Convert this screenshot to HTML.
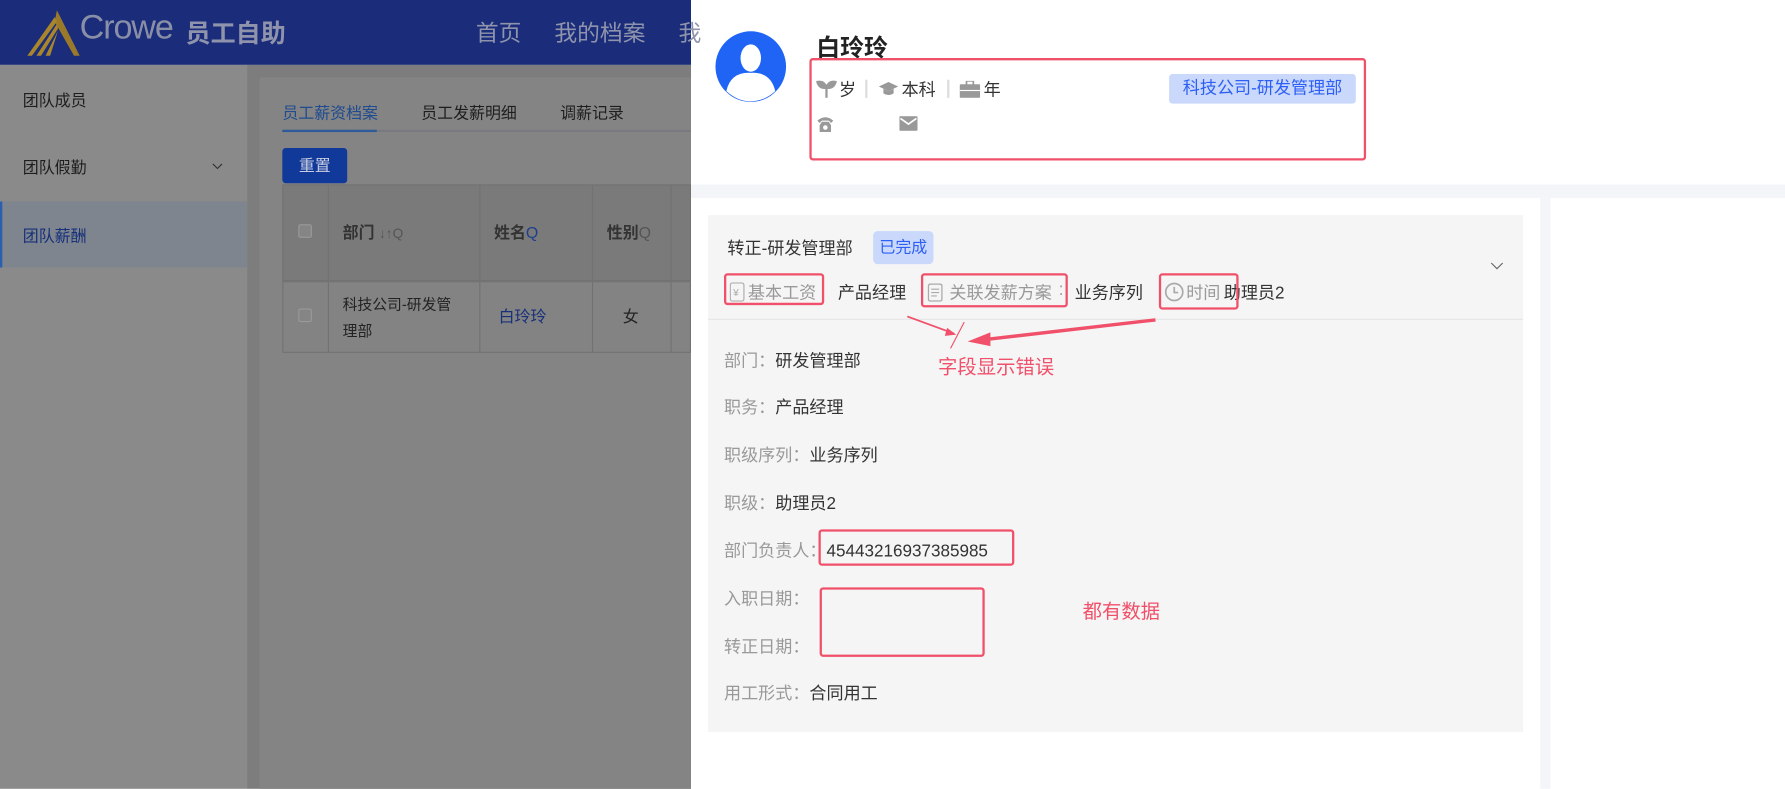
<!DOCTYPE html>
<html><head><meta charset="utf-8"><style>
*{margin:0;padding:0;box-sizing:border-box}
body{width:1785px;height:789px;overflow:hidden;background:#fff;font-family:"Liberation Sans","Noto Sans CJK SC",sans-serif}
#w{width:1568px;height:693px;transform:scale(1.13839);transform-origin:0 0;position:relative;overflow:hidden}
.a{position:absolute;white-space:nowrap}
.rb{position:absolute;border:2px solid #f0506a;border-radius:3px}
.l{font-size:15px;color:#999}
.v{color:#333}
</style></head><body><div id="w">
<div class="a" style="left:0;top:0;width:607px;height:57px;background:#1a2c7a"></div>
<svg class="a" style="left:20px;top:7px" width="52" height="44" viewBox="0 0 52 44"><path d="M30 2 L50 42 L45 42 L28 12Z" fill="#9a7a2a"/><path d="M28 8 L4 42 L8 42 L30 12Z M30 14 L12 42 L16 42 L31 18Z M31 20 L20 42 L24 42Z" fill="#a9852c"/></svg>
<div class="a" style="left:70px;top:8px;font-size:30px;color:#8a8fa8;letter-spacing:-1px">Crowe</div>
<div class="a" style="left:163px;top:12px;font-size:22px;font-weight:bold;color:#8f94ac">员工自助</div>
<div class="a" style="left:418px;top:13px;font-size:20px;color:#8f94ac">首页</div>
<div class="a" style="left:487px;top:13px;font-size:20px;color:#8f94ac">我的档案</div>
<div class="a" style="left:596px;top:13px;font-size:20px;color:#8f94ac">我</div>
<div class="a" style="left:0;top:57px;width:217px;height:636px;background:#8a8a8a"></div>
<div class="a" style="left:20px;top:78px;font-size:14px;color:#1e1e1e">团队成员</div>
<div class="a" style="left:20px;top:137px;font-size:14px;color:#1e1e1e">团队假勤</div>
<svg class="a" style="left:186px;top:142px" width="10" height="8"><path d="M1 2 L5 6 L9 2" stroke="#333" fill="none"/></svg>
<div class="a" style="left:0;top:177px;width:217px;height:58px;background:#7e858f;border-left:2px solid #2a5fb0"></div>
<div class="a" style="left:20px;top:197px;font-size:14px;color:#17307a">团队薪酬</div>
<div class="a" style="left:217px;top:57px;width:390px;height:636px;background:#7d7d7d"></div>
<div class="a" style="left:228px;top:68px;width:379px;height:625px;background:#848484"></div>
<div class="a" style="left:248px;top:89px;font-size:14px;color:#1f4b8f">员工薪资档案</div>
<div class="a" style="left:370px;top:89px;font-size:14px;color:#1e1e1e">员工发薪明细</div>
<div class="a" style="left:492px;top:89px;font-size:14px;color:#1e1e1e">调薪记录</div>
<div class="a" style="left:248px;top:114px;width:359px;height:2px;background:#787a80"></div>
<div class="a" style="left:248px;top:114px;width:83px;height:2px;background:#2d5a98"></div>
<div class="a" style="left:248px;top:130px;width:57px;height:31px;background:#11399a;border-radius:3px;color:#c8cde0;font-size:14px;line-height:31px;text-align:center">重置</div>
<div class="a" style="left:248px;top:162px;width:359px;height:85px;background:#7a7a7a;border:1px solid #727272"></div>
<div class="a" style="left:248px;top:247px;width:359px;height:63px;background:#838383;border:1px solid #727272"></div>
<div class="a" style="left:288px;top:162px;width:1px;height:148px;background:#727272"></div>
<div class="a" style="left:421px;top:162px;width:1px;height:148px;background:#727272"></div>
<div class="a" style="left:520px;top:162px;width:1px;height:148px;background:#727272"></div>
<div class="a" style="left:589px;top:162px;width:1px;height:148px;background:#727272"></div>
<div class="a" style="left:262px;top:197px;width:12px;height:12px;border:1px solid #999;border-radius:2px;background:#858585"></div>
<div class="a" style="left:262px;top:271px;width:12px;height:12px;border:1px solid #999;border-radius:2px;background:#858585"></div>
<div class="a" style="left:301px;top:194px;font-size:14px;font-weight:bold;color:#333">部门 <span style="font-weight:normal;color:#555;font-size:12px">↓↑Q</span></div>
<div class="a" style="left:434px;top:194px;font-size:14px;font-weight:bold;color:#333">姓名<span style="color:#1d3f8f;font-weight:normal">Q</span></div>
<div class="a" style="left:533px;top:194px;font-size:14px;font-weight:bold;color:#333">性别<span style="color:#555;font-weight:normal">Q</span></div>
<div class="a" style="left:301px;top:256px;font-size:13px;color:#222;line-height:23px;white-space:normal;width:108px">科技公司-研发管理部</div>
<div class="a" style="left:438px;top:268px;font-size:14px;color:#17307a">白玲玲</div>
<div class="a" style="left:547px;top:268px;font-size:14px;color:#222">女</div>
<!-- drawer -->
<div class="a" style="left:607px;top:162px;width:961px;height:12px;background:#f4f5f9"></div>
<div class="a" style="left:1353px;top:174px;width:9px;height:519px;background:#f4f5f9"></div>
<svg class="a" style="left:628px;top:27px" width="63" height="63" viewBox="0 0 63 63"><circle cx="31.5" cy="31.5" r="31" fill="#1f64f5"/><ellipse cx="31.5" cy="24" rx="9" ry="12" fill="#fff"/><path d="M10 53 Q14 36 31.5 37 Q49 36 53 53 Q43 62 31.5 62 Q20 62 10 53Z" fill="#fff"/></svg>
<div class="a" style="left:717px;top:26px;font-size:21px;font-weight:bold;color:#222">白玲玲</div>
<div class="rb" style="left:711px;top:51px;width:489px;height:90px"></div>
<svg class="a" style="left:717px;top:70px" width="18" height="16"><path d="M9 16 V7 M9 7 Q3 8 1 2 Q7 1 9 7 Q11 1 17 2 Q15 8 9 7" stroke="#999" stroke-width="2" fill="#999"/></svg>
<div class="a" style="left:737px;top:68px;font-size:15px;color:#333">岁</div>
<div class="a" style="left:760px;top:70px;width:2px;height:16px;background:#ddd"></div>
<svg class="a" style="left:772px;top:71px" width="17" height="15"><path d="M0 5 L8.5 1 L17 5 L8.5 9Z" fill="#999"/><path d="M4 7 V11 Q8.5 14 13 11 V7 L8.5 9Z" fill="#999"/></svg>
<div class="a" style="left:792px;top:68px;font-size:15px;color:#333">本科</div>
<div class="a" style="left:832px;top:70px;width:2px;height:16px;background:#ddd"></div>
<svg class="a" style="left:843px;top:71px" width="18" height="15"><rect x="6" y="0" width="6" height="4" fill="none" stroke="#999" stroke-width="1.5"/><rect x="0" y="3" width="18" height="12" rx="1" fill="#999"/><rect x="0" y="8" width="18" height="1" fill="#fff"/></svg>
<div class="a" style="left:864px;top:68px;font-size:15px;color:#333">年</div>
<div class="a" style="left:1027px;top:65px;width:164px;height:26px;background:#c9d8fb;border-radius:3px;color:#2d5ff5;font-size:15px;line-height:26px;text-align:center">科技公司-研发管理部</div>
<svg class="a" style="left:717px;top:101px" width="16" height="16"><path d="M1 5 Q8 -1 15 5 L13 7 L11 5 L5 5 L3 7Z" fill="#999"/><path d="M3 9 L5 6 H11 L13 9 V15 H3Z" fill="#999"/><circle cx="8" cy="11" r="2" fill="#fff"/></svg>
<svg class="a" style="left:790px;top:102px" width="16" height="13"><rect width="16" height="13" rx="1" fill="#999"/><path d="M1 2 L8 7 L15 2" stroke="#fff" stroke-width="1.5" fill="none"/></svg>
<div class="a" style="left:622px;top:189px;width:716px;height:454px;background:#f5f5f5"></div>
<div class="a" style="left:622px;top:280px;width:716px;height:1px;background:#e6e6e6"></div>
<div class="a" style="left:639px;top:207px;font-size:15px;color:#333">转正-研发管理部</div>
<div class="a" style="left:767px;top:203px;width:53px;height:29px;background:#c9d8fb;border-radius:4px;color:#2d5ff5;font-size:14px;line-height:29px;text-align:center">已完成</div>
<svg class="a" style="left:1309px;top:230px" width="12" height="8"><path d="M1 1 L6 6 L11 1" stroke="#666" fill="none"/></svg>
<svg class="a" style="left:641px;top:248px" width="13" height="17"><rect x="0.5" y="0.5" width="12" height="16" rx="2" fill="none" stroke="#aaa"/><text x="3" y="12" font-size="9" fill="#aaa" font-family="Liberation Sans">¥</text></svg>
<div class="a l" style="left:657px;top:246px">基本工资</div>
<div class="a l" style="left:721px;top:246px">:</div>
<div class="a l v" style="left:736px;top:246px">产品经理</div>
<svg class="a" style="left:815px;top:249px" width="13" height="16"><rect x="0.5" y="0.5" width="12" height="15" rx="2" fill="none" stroke="#aaa" stroke-width="1.3"/><path d="M3 5 H10 M3 8 H10 M3 11 H8" stroke="#aaa"/></svg>
<div class="a l" style="left:834px;top:246px">关联发薪方案</div>
<div class="a l" style="left:930px;top:246px">:</div>
<div class="a l v" style="left:944px;top:246px">业务序列</div>
<svg class="a" style="left:1023px;top:248px" width="17" height="17"><circle cx="8.5" cy="8.5" r="7.5" fill="none" stroke="#aaa" stroke-width="1.5"/><path d="M8.5 4 V9 H12" stroke="#aaa" stroke-width="1.5" fill="none"/></svg>
<div class="a l" style="left:1042px;top:246px">时间</div>
<div class="a l v" style="left:1075px;top:246px">助理员2</div>
<div class="rb" style="left:636px;top:240px;width:88px;height:28px"></div>
<div class="rb" style="left:809px;top:240px;width:129px;height:30px"></div>
<div class="rb" style="left:1018px;top:240px;width:70px;height:32px"></div>
<svg class="a" style="left:700px;top:268px" width="340" height="70"><path d="M97 10 L138 25" stroke="#f0506a" stroke-width="1.5"/><path d="M132 20 L140 26 L130 27Z" fill="#f0506a"/><path d="M147 15 L135 38" stroke="#f0506a" stroke-width="1"/><path d="M315 13 L168 30" stroke="#f0506a" stroke-width="3"/><path d="M150 32 L170 24 L170 36Z" fill="#f0506a"/></svg>
<div class="a" style="left:824px;top:308px;font-size:17px;color:#f0506a">字段显示错误</div>
<div class="a l" style="left:636px;top:306px">部门：<span class="v">研发管理部</span></div>
<div class="a l" style="left:636px;top:347px">职务：<span class="v">产品经理</span></div>
<div class="a l" style="left:636px;top:389px">职级序列：<span class="v">业务序列</span></div>
<div class="a l" style="left:636px;top:431px">职级：<span class="v">助理员2</span></div>
<div class="a l" style="left:636px;top:473px">部门负责人：<span class="v">45443216937385985</span></div>
<div class="rb" style="left:719px;top:465px;width:172px;height:32px"></div>
<div class="a l" style="left:636px;top:515px">入职日期：</div>
<div class="a l" style="left:636px;top:557px">转正日期：</div>
<div class="rb" style="left:720px;top:516px;width:145px;height:61px"></div>
<div class="a" style="left:951px;top:523px;font-size:17px;color:#f0506a">都有数据</div>
<div class="a l" style="left:636px;top:598px">用工形式：<span class="v">合同用工</span></div>
</div></body></html>
